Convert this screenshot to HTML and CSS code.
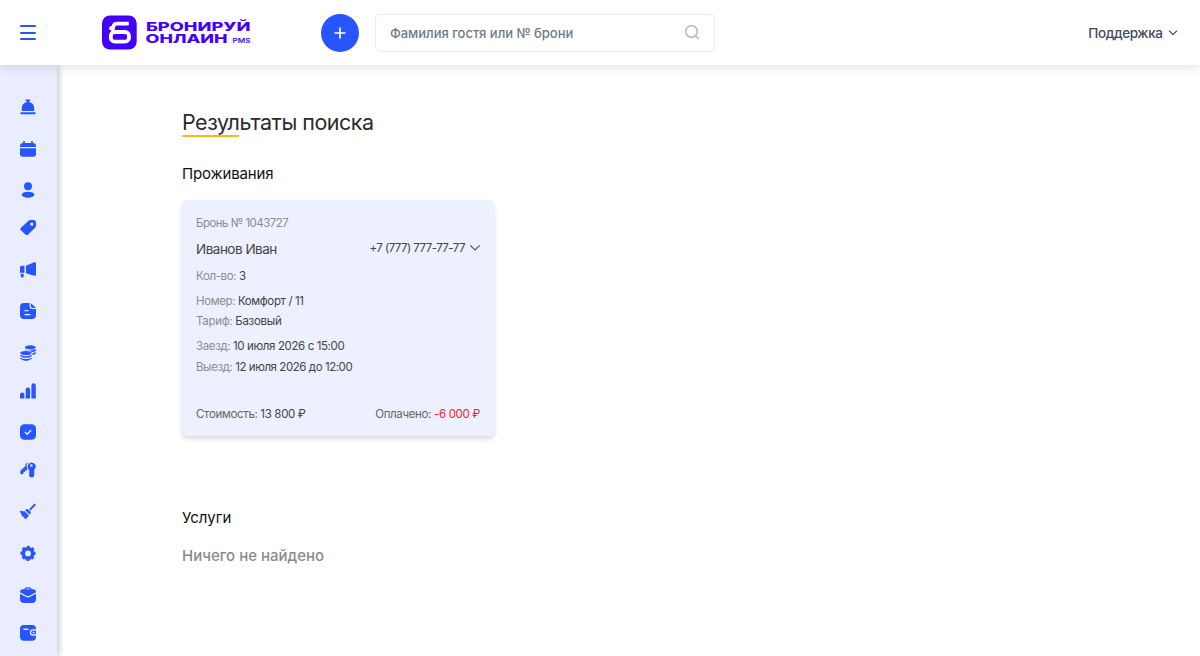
FILE: index.html
```html
<!DOCTYPE html>
<html lang="ru">
<head>
<meta charset="utf-8">
<title>Результаты поиска</title>
<link rel="stylesheet" href="styles.css">
</head>
<body>
<header class="header">
  <button class="menu" aria-label="Меню"><span></span><span></span><span></span></button>
  <a class="logo" aria-label="Бронируй Онлайн">
    <svg width="150" height="36" viewBox="0 0 150 36">
      <rect x="0" y="0.5" width="34.7" height="34" rx="8" fill="#4400ff"/>
      <path d="M26.800 8.600H15Q12 8.600 11.500 11.500L9.500 13.200" fill="none" stroke="#fff" stroke-width="3.600"/>
      <path d="M11 13V17" stroke="#fff" stroke-width="3.600"/>
      <rect x="8.800" y="17" width="18.200" height="9.700" rx="4" fill="none" stroke="#fff" stroke-width="3.800"/>
      <circle cx="9" cy="13.300" r="2" fill="#fff"/>
      <g class="logo-name" fill="#4400ff">
        <text x="44" y="16.300" textLength="104.500" lengthAdjust="spacingAndGlyphs">БРОНИРУЙ</text>
        <text x="43.500" y="28.300" textLength="82" lengthAdjust="spacingAndGlyphs">ОНЛАИН</text>
        <text class="logo-pms" x="130.500" y="28.300" textLength="18" lengthAdjust="spacingAndGlyphs">PMS</text>
      </g>
    </svg>
  </a>
  <button class="add" aria-label="Добавить"><svg width="12" height="12" viewBox="0 0 12 12"><path d="M6 .5v11M.5 6h11" stroke="#fff" stroke-width="1.700"/></svg></button>
  <div class="search">
    <span class="search-text">Фамилия гостя или № брони</span>
    <svg width="16" height="16" viewBox="0 0 16 16" fill="none" stroke="#bdbdbd" stroke-width="1.700"><circle cx="7.500" cy="6.500" r="5.800"/><path d="M11.700 10.700L15 14"/></svg>
  </div>
  <div class="support"><span class="support-text">Поддержка</span><svg width="10" height="6" viewBox="0 0 10 6"><path d="M1 .7l4 4 4-4" fill="none" stroke="#444a57" stroke-width="1.200"/></svg></div>
</header>
<div class="body">
  <nav class="sidebar">
    <svg viewBox="0 0 16 16"><path d="M5.500.5h4.500v1.700H9v.8A6 6 0 0 1 14.200 9v3H1.800V9a6 6 0 0 1 5.200-6v-.8H5.500zM.5 13.200h15v2H.5z"/></svg>
    <svg viewBox="0 0 16 16"><path d="M3.200 0h1.600v2h6.400V0h1.600v2Q16 2.200 16 5v1H0V5Q0 2.200 3.200 2zM0 7.300h16V13q0 2.700-2.700 2.700H2.700Q0 15.700 0 13z"/></svg>
    <svg viewBox="0 0 16 16"><circle cx="8" cy="4.300" r="4"/><ellipse cx="8" cy="12.700" rx="6.300" ry="3"/></svg>
    <svg viewBox="0 0 16 16"><path fill-rule="evenodd" d="M8.300 1Q9.200 0 10.500 0h3Q16 0 16 2.500v3q0 1.300-1 2.200L8.200 14.600q-1.400 1.400-2.800 0L1.200 10.400Q-.4 8.900 1.200 7.500zM11.800 2.500a1.600 1.600 0 1 0 0 3.200a1.600 1.600 0 1 0 0-3.200z"/></svg>
    <svg viewBox="0 0 16 16"><path d="M6 3.700L14.200.3Q16 0 16 1.500v11.200q0 1.500-1.800 1L6 11.200zM1.500 3.700h3v7H0V5.200q0-1.500 1.500-1.500zM.7 11.800h3v2.700q-.2 1-1.500 1T.7 14.500z"/></svg>
    <svg viewBox="0 0 16 16"><path fill-rule="evenodd" d="M4 0h5.500v3q0 3 3 3H16v6q0 4-4 4H4q-4 0-4-4V4q0-4 4-4zM4.500 7v1.200h4V7zM4.500 11v1.200h6V11z"/><path d="M10.800 0L16 4.900h-3.200q-2 0-2-2z"/></svg>
    <svg viewBox="0 0 16 16"><ellipse cx="10.300" cy="2.300" rx="5.500" ry="2"/><path d="M5 4.500q5 2 10.800-.5v2q-2 1-3.800 1Q9 4.700 5 5.500zM12.500 8q2-.2 3.300-1v1.700q-1 1-3.300 1.300z"/><ellipse cx="6" cy="8" rx="5.800" ry="2"/><path d="M.2 10q5.800 2.300 11.600 0v1.200q-5.800 3.300-11.600 0zM.2 12.700q5.800 2.700 11.600 0v1.100q-5.800 4.200-11.600 0z"/></svg>
    <svg viewBox="0 0 16 16"><path d="M0 15.500v-3.700a2.200 2.200 0 0 1 4.400 0v3.700zM5.700 15.500V6.600a2.200 2.200 0 0 1 4.400 0v8.900zM11.400 15.500V2.400a2.200 2.200 0 0 1 4.400 0v13.100z"/></svg>
    <svg viewBox="0 0 16 16"><rect y=".3" width="16" height="15.500" rx="4.500"/><path class="cut" d="M5 8.100l2.100 2.100 4-4"/></svg>
    <svg viewBox="0 0 16 16"><path fill-rule="evenodd" d="M11.400.4a4.200 4.200 0 0 1 2.800 7.400v5.700q0 2-2.500 2T9.200 13.700V7.900A4.200 4.200 0 0 1 11.400.4zM11.400 2.300a1.200 1.200 0 1 0 0 2.400a1.200 1.200 0 1 0 0-2.400z"/><path d="M7.600.5Q5 1.500 5 4.500L.7 8.600q-1 1.500 0 3.300Q2.500 12.900 3.500 11.500V10H5V8.500h2.200V6.500Q5.500 3 8.200.6z"/></svg>
    <svg viewBox="0 0 16 16"><path d="M14.500.4L16 1.800 10.700 7.400 9.200 5.900zM8.400 6.600l2 2q.8 1.200-.3 2.500l-.7.400-4.200-4.200.6-.7q1-1 2.600 0zM4.300 7.900l4.600 4.600-2.800 3.500-2.300-1 .8-1.300-1.800.3L.4 9.600 0 7.600q2.200 1.100 4.300.3z"/></svg>
    <svg viewBox="0 0 16 16"><circle cx="8" cy="8.400" r="4.700" fill="none" stroke="#2755ff" stroke-width="3.600"/><circle cx="8" cy="8.400" r="6.600" fill="none" stroke="#2755ff" stroke-width="2" stroke-dasharray="2.900 2.284" stroke-dashoffset="1.450"/></svg>
    <svg viewBox="0 0 16 16"><path d="M5 3Q5 .8 7 .8h2q2 0 2 2.200" fill="none" stroke="#2755ff" stroke-width="1.300"/><path d="M3 2.300h10q3 0 3 3L9.500 8.800q-1.500.7-3 0L0 5.300q0-3 3-3zM0 6.700l6.300 3.400q1.700.8 3.400 0L16 6.700V12q0 4-4 4H4q-4 0-4-4z"/></svg>
    <svg viewBox="0 0 16 16"><rect width="16" height="15.700" rx="4"/><path class="cut" d="M3.500 4.200h5M16.500 4.900H13q-2.500 0-2.500 2.600T13 10h3.500M12.800 7.500h1.700"/></svg>
  </nav>
  <main class="content">
    <h1 class="title">Результаты поиска</h1>
    <h2 class="section">Проживания</h2>
    <article class="card">
      <div class="line number">Бронь № 1043727</div>
      <div class="guest"><span class="name">Иванов Иван</span><span class="phone"><span>+7 (777) 777-77-77</span><svg width="10" height="6" viewBox="0 0 10 6"><path d="M.3.500L5 5 9.700.5" fill="none" stroke="#555" stroke-width="1.100"/></svg></span></div>
      <div class="line count">Кол-во: <b>3</b></div>
      <div class="line room">Номер: <b>Комфорт / 11</b></div>
      <div class="line rate">Тариф: <b>Базовый</b></div>
      <div class="line arrive">Заезд: <b>10 июля 2026 с 15:00</b></div>
      <div class="line leave">Выезд: <b>12 июля 2026 до 12:00</b></div>
      <div class="totals"><span class="cost">Стоимость: <b>13 800 ₽</b></span><span class="paid">Оплачено: <b class="debt">-6 000 ₽</b></span></div>
    </article>
    <h2 class="section services">Услуги</h2>
    <p class="empty">Ничего не найдено</p>
  </main>
</div>
</body>
</html>
```
FILE: styles.css
```css
* { box-sizing: border-box; }
body { margin: 0; height: 656px; overflow: hidden; background: #fff; color: #222; font-family: Inter, "Liberation Sans", sans-serif; }
button { border: 0; padding: 0; background: none; }
h1, h2, p { margin: 0; font-weight: 400; }
svg { display: block; flex: none; }

.header { position: relative; z-index: 2; height: 65px; display: flex; align-items: center; padding: 0 22px 0 20px; background: #fff; box-shadow: 0 2px 10px rgba(0, 0, 0, .12); }
.menu { width: 16px; display: flex; flex-direction: column; gap: 4.500px; }
.menu span { height: 2px; border-radius: 1px; background: #2755ff; }
.logo { margin-left: 66px; }
.logo-name { font-weight: 800; font-size: 12px; }
.logo-pms { font-size: 6.500px; font-weight: 600; }
.add { width: 38px; height: 38px; margin-left: 69px; border-radius: 50%; background: #2755ff; display: grid; place-items: center; }
.search { width: 340px; height: 38px; margin-left: 16px; padding: 0 14px; border: 1px solid #ebebeb; border-radius: 5px; display: flex; align-items: center; justify-content: space-between; font-size: 13px; font-weight: 500; letter-spacing: -.03px; color: #6c7b88; }
.support { margin-left: auto; display: flex; align-items: center; gap: 5.500px; font-size: 13.500px; letter-spacing: -.4px; font-weight: 450; color: #444a57; }

.body { display: flex; height: 591px; }
.sidebar { width: 57px; flex: none; padding: 34px 0 0 20px; display: grid; align-content: start; grid-template-rows: 42px 41px 38px 42px 41px 42px 38px 41px 38px 41px 42px 42px 38px 16px; background: #e9edff; box-shadow: 2px 0 6px rgba(0, 0, 0, .22); }
.sidebar svg { width: 16px; height: 16px; fill: #2755ff; }
.sidebar .cut { fill: none; stroke: #e9edff; stroke-width: 1.400; }

.content { padding: 43px 0 0 125px; }
.title { font-size: 21.500px; line-height: 28px; letter-spacing: -.5px; white-space: nowrap; color: #2b2b2b; }
.title::after { content: ""; display: block; width: 57px; height: 2px; margin-top: -1.500px; border-radius: 1px; background: #fdb913; }
.section { margin-top: 26.500px; font-size: 15px; line-height: 22px; letter-spacing: -.15px; color: #111; }
.card { width: 312px; height: 236px; margin-top: 15px; padding: 13px 14px 0; border-radius: 5px; background: #edf0ff; box-shadow: 0 3px 5px rgba(0, 0, 0, .15); font-size: 11.500px; letter-spacing: -.38px; color: #8c8c91; }
.card b { font-weight: 400; color: #444; }
.card .debt { color: #ff1c2c; }
.line { line-height: 20px; white-space: nowrap; }
.number { letter-spacing: -.52px; }
.guest { display: flex; justify-content: space-between; height: 24px; margin-top: 4px; line-height: 24px; color: #444; }
.name { font-size: 13.500px; letter-spacing: -.5px; }
.phone { display: flex; align-items: center; gap: 5px; height: 22px; letter-spacing: -.54px; }
.count { margin-top: 5px; }
.room { margin-top: 5px; }
.rate { letter-spacing: -.3px; }
.arrive { margin-top: 5px; }
.leave { margin-top: 1px; letter-spacing: -.43px; }
.totals { display: flex; justify-content: space-between; margin-top: 27px; line-height: 20px; letter-spacing: -.34px; color: #666; }
.services { margin-top: 71px; letter-spacing: 0; }
.empty { margin-top: 16px; font-size: 15px; line-height: 22px; font-weight: 500; color: #8a8a8a; }
```
